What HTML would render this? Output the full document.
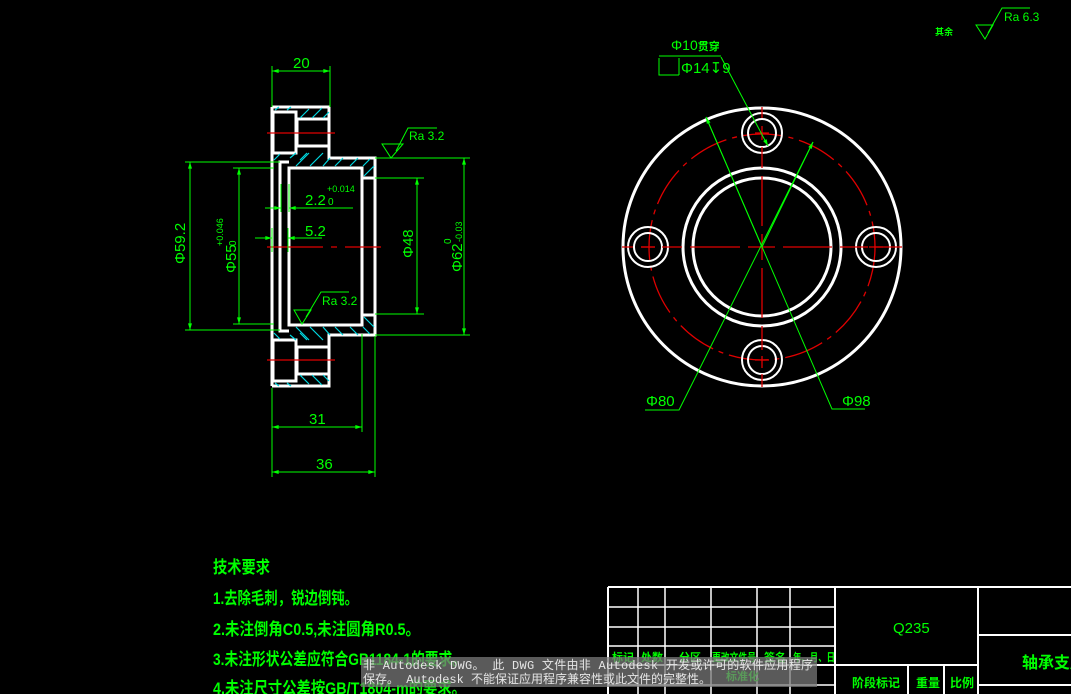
<!DOCTYPE html>
<html><head><meta charset="utf-8"><style>
html,body{margin:0;padding:0;background:#000;width:1071px;height:694px;overflow:hidden}
svg{display:block}
text{font-family:"Liberation Sans","Noto Sans CJK SC",sans-serif;fill:#00ff00}
.g{stroke:#00ff00;stroke-width:1;fill:none}
.w{stroke:#fff;stroke-width:3;fill:none}
.wt{stroke:#fff;stroke-width:2;fill:none}
.r{stroke:#e00000;stroke-width:1.3;fill:none}
.c{stroke:#00d8e0;stroke-width:1.2;fill:none}
.cn{font-family:"Noto Sans CJK SC",sans-serif;font-weight:bold}
</style></head><body>
<svg width="1071" height="694" viewBox="0 0 1071 694">
<defs>
<g id="half">
  <path class="w" d="M272,107 H329 V158 H375 V247"/>
  <path class="w" d="M272,107 V247"/>
  <rect class="w" x="273" y="112" width="23" height="41"/>
  <rect class="w" x="297" y="119" width="32" height="27"/>
  <path class="w" d="M289,247 V168 H362 V178 H375"/>
  <path class="w" d="M362,178 V247"/>
  <path class="w" d="M280,247 V162 H289"/>
  <g class="c">
    <path d="M275,110 l4,-3 M287,110 l4,-3 M300,118 l9,-9 M312,118 l10,-10 M323,118 l6,-6"/>
    <path d="M274,160 l6,-6 M290,158 l6,-5 M300,160 l7,-7 M296,166 l13,-13 M310,166 l13,-13 M323,166 l7,-8 M335,166 l8,-8 M350,166 l8,-8 M363,166 l7,-7 M364,176 l10,-10"/>
  </g>
  <path class="r" d="M267,133 H335"/>
</g>
<marker id="a" viewBox="0 0 10 6" refX="10" refY="3" markerWidth="10" markerHeight="4" orient="auto-start-reverse"><path d="M0,0 L10,3 L0,6 z" fill="#00ff00"/></marker>
</defs>

<use href="#half"/>
<use href="#half" transform="translate(0,493) scale(1,-1)"/>
<path class="r" d="M267,247 H323 M331,247 H337 M345,247 H381"/>

<g class="g">
  <path d="M272,66 V107 M330,66 V107"/>
  <path d="M272,71 H330" marker-start="url(#a)" marker-end="url(#a)"/>
  <path d="M185,162 H280 M185,330 H280"/>
  <path d="M190,162 V330" marker-start="url(#a)" marker-end="url(#a)"/>
  <path d="M233,168 H274 M233,324 H274"/>
  <path d="M239,168 V324" marker-start="url(#a)" marker-end="url(#a)"/>
  <path d="M281,184 V212 M289,184 V212"/>
  <path d="M265,208 H281" marker-end="url(#a)"/><path d="M353,208 H289" marker-end="url(#a)"/>
  <path d="M272,228 V252 M288,228 V252"/>
  <path d="M255,238 H272" marker-end="url(#a)"/><path d="M322,238 H288" marker-end="url(#a)"/>
  <path d="M375,178 H424 M375,314 H424"/>
  <path d="M417,178 V314" marker-start="url(#a)" marker-end="url(#a)"/>
  <path d="M375,158 H470 M375,335 H470"/>
  <path d="M464,158 V335" marker-start="url(#a)" marker-end="url(#a)"/>
  <path d="M272,388 V477 M362,334 V432 M375,336 V477"/>
  <path d="M272,427 H362" marker-start="url(#a)" marker-end="url(#a)"/>
  <path d="M272,472 H375" marker-start="url(#a)" marker-end="url(#a)"/>
  <path d="M382,144 H403 L391,158 Z M396,151 L408,128 H437"/>
  <path d="M294,310 H311 L302,324 Z M306,317 L321,292 H349"/>
  <path d="M976,25 H993 L985,39 Z M988,33 L1002,8 H1030"/>
</g>
<g font-size="15">
  <text x="293" y="68">20</text>
  <text x="305" y="205">2.2</text>
  <text x="327" y="192" font-size="9">+0.014</text>
  <text x="328" y="205" font-size="10">0</text>
  <text x="305" y="236">5.2</text>
  <text x="309" y="424">31</text>
  <text x="316" y="469">36</text>
  <text transform="translate(185,264) rotate(-90)">Φ59.2</text>
  <text transform="translate(236,273) rotate(-90)">Φ55</text>
  <text transform="translate(223,246) rotate(-90)" font-size="9">+0.046</text>
  <text transform="translate(236,246) rotate(-90)" font-size="10">0</text>
  <text transform="translate(413,258) rotate(-90)">Φ48</text>
  <text transform="translate(462,272) rotate(-90)">Φ62</text>
  <text transform="translate(451,244) rotate(-90)" font-size="10">0</text>
  <text transform="translate(462,242) rotate(-90)" font-size="9">-0.03</text>
  <text x="409" y="140" font-size="12">Ra 3.2</text>
  <text x="322" y="305" font-size="12">Ra 3.2</text>
  <text x="1004" y="21" font-size="12">Ra 6.3</text>
  <text x="935" y="35" font-size="9" class="cn">其余</text>
</g>

<g>
  <circle class="w" cx="762" cy="247" r="139"/>
  <circle class="r" cx="762" cy="247" r="113" stroke-dasharray="40 6 5 6"/>
  <circle class="w" cx="762" cy="247" r="79"/>
  <circle class="w" cx="762" cy="247" r="69"/>
  <g class="wt">
    <circle cx="762" cy="133" r="20"/><circle cx="762" cy="133" r="14"/>
    <circle cx="648" cy="247" r="20"/><circle cx="648" cy="247" r="14"/>
    <circle cx="876" cy="247" r="20"/><circle cx="876" cy="247" r="14"/>
    <circle cx="762" cy="360" r="20"/><circle cx="762" cy="360" r="14"/>
  </g>
  <path class="r" d="M622,247 H633 M641,247 H655 M662,247 H682 M690,247 H740 M748,247 H775 M783,247 H832 M840,247 H868 M874,247 H902"/>
  <path class="r" d="M762,107 V118 M762,126 V140 M762,147 V168 M762,176 V226 M762,234 V260 M762,268 V318 M762,326 V350 M762,356 V368 M762,374 V387"/>
  <path class="r" d="M755,133 H769 M641,247 H655 M869,247 H883 M755,360 H769"/>
</g>
<g class="g">
  <path d="M659,56 H721"/>
  <path d="M721,57 L768,146" marker-end="url(#a)"/>
  <path d="M659,58 V75 H679 M679,58 V75"/>
  <path d="M706,117 L832,409 H865"/>
  <path d="M762,247 L706,117" marker-end="url(#a)"/>
  <path d="M762,247 L813,142" marker-end="url(#a)"/>
  <path d="M813,142 L679,410 H645"/>
</g>
<g font-size="15">
  <text x="671" y="50" font-size="14">Φ10<tspan class="cn" font-size="11">贯穿</tspan></text>
  <text x="681" y="73" font-size="15">Φ14↧9</text>
  <text x="646" y="406">Φ80</text>
  <text x="842" y="406">Φ98</text>
</g>

<g class="cn" font-size="17">
  <text x="213" y="573" textLength="57" lengthAdjust="spacingAndGlyphs">技术要求</text>
  <text x="213" y="604" textLength="145" lengthAdjust="spacingAndGlyphs">1.去除毛刺，锐边倒钝。</text>
  <text x="213" y="635" textLength="207" lengthAdjust="spacingAndGlyphs">2.未注倒角C0.5,未注圆角R0.5。</text>
  <text x="213" y="665" textLength="253" lengthAdjust="spacingAndGlyphs">3.未注形状公差应符合GB1184-1的要求。</text>
  <text x="213" y="694" textLength="253" lengthAdjust="spacingAndGlyphs">4.未注尺寸公差按GB/T1804-m的要求。</text>
</g>

<g class="wt">
  <path d="M608,587 H1071 M608,587 V694 M835,587 V694 M978,587 V694"/>
  <path d="M608,607 H835 M608,627 H835 M608,646 H835 M608,685 H835" stroke-width="1.5"/>
  <path d="M608,665 H978 M978,635 H1071 M978,685 H1071"/>
  <path d="M638,587 V694 M665,587 V694 M711,587 V694 M757,587 V694 M790,587 V694" stroke-width="1.5"/>
  <path d="M908,665 V694 M944,665 V694"/>
</g>
<g class="cn" font-size="11">
  <text x="612" y="661">标记</text><text x="641" y="661">处数</text><text x="679" y="661">分区</text>
  <text x="712" y="661" textLength="44" lengthAdjust="spacingAndGlyphs">更改文件号</text><text x="764" y="661">签名</text><text x="793" y="661" textLength="42" lengthAdjust="spacingAndGlyphs">年、月、日</text>
  <text x="726" y="680">标准化</text>
  <text x="852" y="687" font-size="12">阶段标记</text><text x="916" y="687" font-size="12">重量</text><text x="950" y="687" font-size="12">比例</text>
  <text x="1022" y="668" font-size="16">轴承支座</text>
</g>
<text x="893" y="633" font-size="15">Q235</text>

<rect x="361" y="657" width="456" height="30" fill="rgba(120,120,120,0.75)"/>
<text x="363" y="669" font-size="12" textLength="450" lengthAdjust="spacing" style="fill:#e6e6e6;font-family:'Liberation Mono','Noto Sans CJK SC',monospace">非 Autodesk DWG。 此 DWG 文件由非 Autodesk 开发或许可的软件应用程序</text>
<text x="363" y="683" font-size="12" style="fill:#e6e6e6;font-family:'Liberation Mono','Noto Sans CJK SC',monospace">保存。 Autodesk 不能保证应用程序兼容性或此文件的完整性。</text>
</svg>
</body></html>
